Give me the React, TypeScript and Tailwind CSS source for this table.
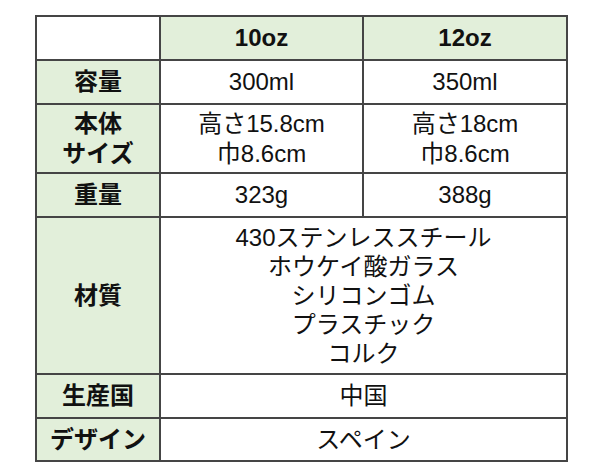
const font = { fontFamily: '"Liberation Sans", "Noto Sans CJK JP", sans-serif' };

function Label({ children }: { children: React.ReactNode }) {
  return (
    <div className="flex flex-col items-center justify-center bg-[#e2efda] text-[24px] font-bold leading-[30px] text-[#111]">
      {children}
    </div>
  );
}

function Cell({ children, span }: { children: React.ReactNode; span?: boolean }) {
  return (
    <div
      className={
        (span ? "col-span-2 " : "") +
        "flex flex-col items-center justify-center bg-white text-[24px] leading-[30px] text-[#111]"
      }
    >
      {children}
    </div>
  );
}

export default function App() {
  return (
    <div className="h-[473px] w-[600px] bg-white pl-[35px] pt-[15px]" style={font}>
      <div className="grid w-[533px] grid-cols-[122px_201px_202px] grid-rows-[42px_42px_67px_42px_155px_42px_41px] gap-[2px] bg-[#454545] p-[2px]">
        <div className="bg-white" />
        <Label>10oz</Label>
        <Label>12oz</Label>

        <Label>容量</Label>
        <Cell>300ml</Cell>
        <Cell>350ml</Cell>

        <Label>
          <span>本体</span>
          <span>サイズ</span>
        </Label>
        <Cell>
          <span>高さ15.8cm</span>
          <span>巾8.6cm</span>
        </Cell>
        <Cell>
          <span>高さ18cm</span>
          <span>巾8.6cm</span>
        </Cell>

        <Label>重量</Label>
        <Cell>323g</Cell>
        <Cell>388g</Cell>

        <Label>材質</Label>
        <Cell span>
          <div className="flex flex-col items-center leading-[29px]">
            <span>430ステンレススチール</span>
            <span>ホウケイ酸ガラス</span>
            <span>シリコンゴム</span>
            <span>プラスチック</span>
            <span>コルク</span>
          </div>
        </Cell>

        <Label>生産国</Label>
        <Cell span>中国</Cell>

        <Label>デザイン</Label>
        <Cell span>スペイン</Cell>
      </div>
    </div>
  );
}
